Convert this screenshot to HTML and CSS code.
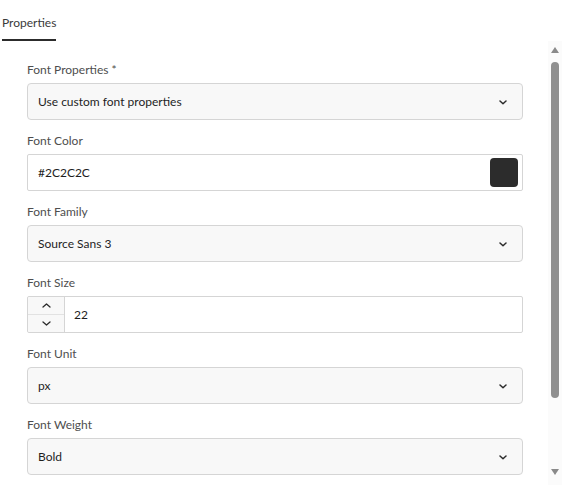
FILE: index.html
```html
<!DOCTYPE html>
<html>
<head>
<meta charset="utf-8">
<link rel="stylesheet" href="styles.css">
</head>
<body>
<div class="panel">
  <div class="tabs">
    <div class="tab">Properties</div>
  </div>
  <div class="body">
    <div class="form">
      <div class="group">
        <div class="label">Font Properties *</div>
        <div class="field select"><span>Use custom font properties</span><svg class="chev" width="8" height="5" viewBox="0 0 8 5"><path d="M1 1 L4 3.8 L7 1" fill="none" stroke="#2c2c2c" stroke-width="1.5" stroke-linecap="round" stroke-linejoin="round"/></svg></div>
      </div>
      <div class="group">
        <div class="label">Font Color</div>
        <div class="field text"><span>#2C2C2C</span><div class="swatch"></div></div>
      </div>
      <div class="group">
        <div class="label">Font Family</div>
        <div class="field select"><span>Source Sans 3</span><svg class="chev" width="8" height="5" viewBox="0 0 8 5"><path d="M1 1 L4 3.8 L7 1" fill="none" stroke="#2c2c2c" stroke-width="1.5" stroke-linecap="round" stroke-linejoin="round"/></svg></div>
      </div>
      <div class="group">
        <div class="label">Font Size</div>
        <div class="field number">
          <div class="stepper">
            <div class="step"><svg width="9" height="5" viewBox="0 0 9 5"><path d="M1 4 L4.5 1 L8 4" fill="none" stroke="#2c2c2c" stroke-width="1.3" stroke-linecap="round" stroke-linejoin="round"/></svg></div>
            <div class="step"><svg width="9" height="5" viewBox="0 0 9 5"><path d="M1 1 L4.5 4 L8 1" fill="none" stroke="#2c2c2c" stroke-width="1.3" stroke-linecap="round" stroke-linejoin="round"/></svg></div>
          </div>
          <span class="num">22</span>
        </div>
      </div>
      <div class="group">
        <div class="label">Font Unit</div>
        <div class="field select"><span>px</span><svg class="chev" width="8" height="5" viewBox="0 0 8 5"><path d="M1 1 L4 3.8 L7 1" fill="none" stroke="#2c2c2c" stroke-width="1.5" stroke-linecap="round" stroke-linejoin="round"/></svg></div>
      </div>
      <div class="group">
        <div class="label">Font Weight</div>
        <div class="field select"><span>Bold</span><svg class="chev" width="8" height="5" viewBox="0 0 8 5"><path d="M1 1 L4 3.8 L7 1" fill="none" stroke="#2c2c2c" stroke-width="1.5" stroke-linecap="round" stroke-linejoin="round"/></svg></div>
      </div>
    </div>
    <div class="scrollbar">
      <div class="arrow up"></div>
      <div class="track"><div class="thumb"></div></div>
      <div class="arrow down"></div>
    </div>
  </div>
</div>
</body>
</html>
```
FILE: styles.css
```css
* { box-sizing: border-box; }
html, body { margin: 0; padding: 0; background: #ffffff; }
body {
  font-family: "Lato", "Noto Sans", sans-serif;
  font-size: 12px;
  color: #2c2c2c;
  width: 562px;
  height: 485px;
  overflow: hidden;
}
.panel { padding: 0 0 0 2px; }
.tabs { height: 41px; display: flex; align-items: flex-end; }
.tab {
  width: 54px;
  padding-bottom: 9px;
  border-bottom: 2px solid #2c2c2c;
  font-size: 12px;
  color: #3a3a3a;
  line-height: 14px;
  white-space: nowrap;
}
.body { display: flex; }
.form {
  width: 496px;
  margin-left: 25px;
  padding-top: 20px;
  display: flex;
  flex-direction: column;
  gap: 12px;
}
.group { display: flex; flex-direction: column; }
.label {
  font-size: 12px;
  line-height: 16px;
  color: #4e4e4e;
  height: 22px;
  padding-top: 1px;
}
.field {
  height: 37px;
  border: 1px solid #d5d5d5;
  border-radius: 4px;
  display: flex;
  align-items: center;
  font-size: 12px;
  color: #1e1e1e;
}
.select { background: #f8f8f8; padding: 0 15px 0 10px; justify-content: space-between; }
.text { background: #fff; padding: 0 4px 0 10px; justify-content: space-between; border-radius: 2px; }
.swatch { width: 28px; height: 29px; background: #2c2c2c; border-radius: 4px; }
.chev { display: block; margin-top: 1px; }
.number { background: #fff; border-radius: 2px; }
.stepper {
  width: 37px;
  height: 100%;
  border-right: 1px solid #d5d5d5;
  background: #f8f8f8;
  display: flex;
  flex-direction: column;
  border-radius: 3px 0 0 3px;
}
.step { flex: 1; display: flex; align-items: center; justify-content: center; }
.step + .step { border-top: 1px solid #e2e2e2; }
.num { padding-left: 9px; }
.scrollbar {
  margin-left: 25px;
  width: 14px;
  height: 444px;
  display: flex;
  flex-direction: column;
  align-items: center;
  background: #fbfbfb;
}
.arrow { width: 0; height: 0; border-left: 4px solid transparent; border-right: 4px solid transparent; }
.up { border-bottom: 6px solid #8a8a8a; margin-top: 6px; }
.down { border-top: 6px solid #8a8a8a; margin-bottom: 10px; }
.track { flex: 1; width: 100%; display: flex; justify-content: center; padding-top: 9px; }
.thumb { width: 8px; height: 336px; background: #8f8f8f; border-radius: 4px; }
```
